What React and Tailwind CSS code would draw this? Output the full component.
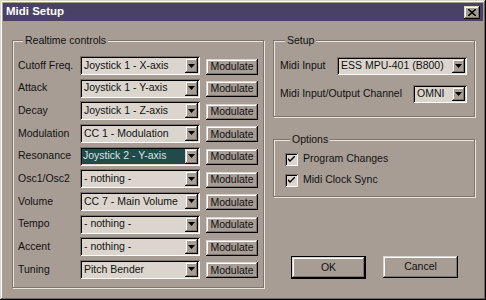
import React from "react";

const face = "bg-[#a89d95]";
const raised =
  "shadow-[inset_-1px_-1px_0_#000,inset_1px_1px_0_#dcd5ce,inset_-2px_-2px_0_#7e746d,inset_2px_2px_0_#fff]";
const sunken =
  "shadow-[inset_1px_1px_0_#7e746d,inset_-1px_-1px_0_#fff,inset_2px_2px_0_#000,inset_-2px_-2px_0_#dcd5ce]";

const controls = [
  ["Cutoff Freq.", "Joystick 1 - X-axis"],
  ["Attack", "Joystick 1 - Y-axis"],
  ["Decay", "Joystick 1 - Z-axis"],
  ["Modulation", "CC 1 - Modulation"],
  ["Resonance", "Joystick 2 - Y-axis", true],
  ["Osc1/Osc2", "- nothing -"],
  ["Volume", "CC 7 - Main Volume"],
  ["Tempo", "- nothing -"],
  ["Accent", "- nothing -"],
  ["Tuning", "Pitch Bender"],
];

function Arrow() {
  return (
    <div className={`w-[13px] h-full ${face} ${raised} flex items-center justify-center`}>
      <svg width="7" height="4" viewBox="0 0 7 4">
        <path d="M0 0h7L3.5 4z" fill="#000" />
      </svg>
    </div>
  );
}

// combo box with sunken edge and drop button
function Combo({ value, width, height = "h-[19px]", selected }) {
  return (
    <div className={`flex ${width} ${height} bg-[#dcd5ce] ${sunken} p-[2px]`}>
      <div className="flex-1 flex items-center min-w-0">
        <span
          className={
            selected
              ? "w-full h-full flex items-center pl-[1px] bg-[#214a4a] text-[#d6e6e4]"
              : "pl-[2px] whitespace-nowrap"
          }
        >
          {value}
        </span>
      </div>
      <Arrow />
    </div>
  );
}

function Group({ title, className, children }) {
  return (
    <fieldset
      className={`border border-[#7e746d] shadow-[inset_1px_1px_0_#ebe5df,1px_1px_0_#ebe5df] ${className}`}
    >
      <legend className={`ml-[5px] px-[2px] leading-[12px] ${face}`}>{title}</legend>
      {children}
    </fieldset>
  );
}

function Check({ label }) {
  return (
    <div className="flex items-center h-[16px] gap-[5px]">
      <div className={`w-[13px] h-[13px] bg-[#dcd5ce] ${sunken} flex items-center justify-center`}>
        <svg width="7" height="7" viewBox="0 0 7 7">
          <path d="M0 2v2l2 2 5-5V-1L2 4z" fill="#000" />
        </svg>
      </div>
      <span>{label}</span>
    </div>
  );
}

export default function App() {
  return (
    <div
      className={`w-[486px] h-[300px] ${face} p-[3px] text-[10.5px] text-[#111] font-['Liberation_Sans',Arial,sans-serif] shadow-[inset_-1px_-1px_0_#000,inset_1px_1px_0_#dcd5ce,inset_-2px_-2px_0_#6f665f,inset_2px_2px_0_#fff]`}
    >
      <div className="h-[18px] bg-[#4a4266] flex items-center justify-between pl-[3px] pr-[3px]">
        <span className="text-white font-bold text-[11.5px]">Midi Setup</span>
        <div className={`w-[16px] h-[13px] ${face} ${raised} flex items-center justify-center`}>
          <svg width="8" height="7" viewBox="0 0 8 7">
            <path d="M0 0l8 7M8 0L0 7" stroke="#000" strokeWidth="1.6" />
          </svg>
        </div>
      </div>

      <div className="flex pl-[9px] pt-[13px]">
        <Group title="Realtime controls" className="pl-[5px] pr-[5px] pt-[10px] pb-[8px]">
          <div className="flex flex-col gap-[3.67px]">
            {controls.map(([label, value, sel]) => (
              <div key={label} className="flex items-center h-[19px]">
                <span className="w-[62px] whitespace-nowrap">{label}</span>
                <Combo value={value} width="w-[120px]" selected={sel} />
                <button
                  className={`ml-[6px] mt-[2px] w-[52px] h-[16px] ${face} ${raised} flex items-center justify-center`}
                >
                  Modulate
                </button>
              </div>
            ))}
          </div>
        </Group>

        <div className="ml-[9px] w-[202px] flex flex-col">
          <Group title="Setup" className="pl-[6px] pr-[7px] pt-[11px] pb-[13px]">
            <div className="flex items-center justify-between h-[18px]">
              <span>Midi Input</span>
              <Combo value="ESS MPU-401 (B800)" width="w-[130px]" height="h-[18px]" />
            </div>
            <div className="flex items-center justify-between h-[18px] mt-[10px]">
              <span>Midi Input/Output Channel</span>
              <Combo value="OMNI" width="w-[54px]" height="h-[18px]" />
            </div>
          </Group>

          <Group title="Options" className="mt-[16px] pl-[11px] pt-[6px] pb-[8px]">
            <div className="flex flex-col gap-[5px]">
              <Check label="Program Changes" />
              <Check label="Midi Clock Sync" />
            </div>
          </Group>

          <div className="flex gap-[17px] pl-[18px] mt-[59px]">
            <button className="w-[75px] h-[23px] border border-black">
              <div className={`w-full h-full ${face} ${raised} flex items-center justify-center`}>OK</div>
            </button>
            <button className={`w-[75px] h-[22px] ${face} ${raised} flex items-center justify-center`}>
              Cancel
            </button>
          </div>
        </div>
      </div>
    </div>
  );
}
